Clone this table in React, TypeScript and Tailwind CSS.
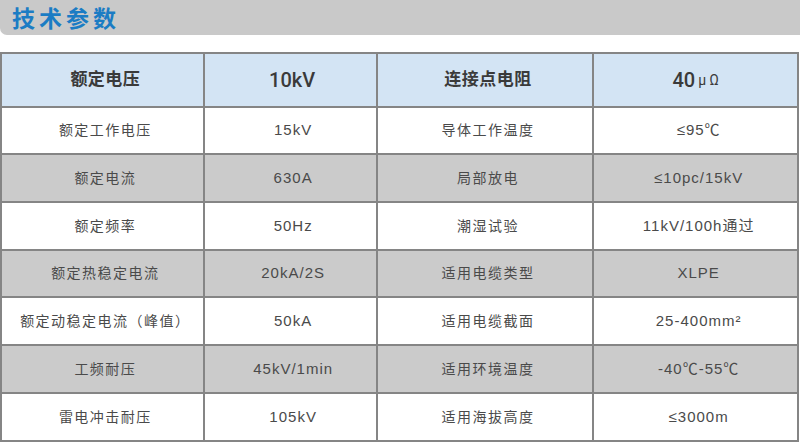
import React from "react";

const rows: [string, string, string, string][] = [
  ["额定工作电压", "15kV", "导体工作温度", "≤95℃"],
  ["额定电流", "630A", "局部放电", "≤10pc/15kV"],
  ["额定频率", "50Hz", "潮湿试验", "11kV/100h通过"],
  ["额定热稳定电流", "20kA/2S", "适用电缆类型", "XLPE"],
  ["额定动稳定电流（峰值）", "50kA", "适用电缆截面", "25-400mm²"],
  ["工频耐压", "45kV/1min", "适用环境温度", "-40℃-55℃"],
  ["雷电冲击耐压", "105kV", "适用海拔高度", "≤3000m"],
];

const heights = ["h-[47px]", "h-[48px]", "h-[48px]", "h-[47px]", "h-[48px]", "h-[48px]", "h-[48px]"];
const widths = ["w-[203px]", "w-[173px]", "w-[217px]", "w-[205px]"];

const font = { fontFamily: '"Liberation Sans", "Noto Sans CJK SC", sans-serif' };
const numFont = { fontFamily: 'Roboto, "Liberation Sans", sans-serif' };

export default function App() {
  return (
    <div className="w-[800px] h-[448px] bg-white overflow-hidden" style={font}>
      <div className="h-[35px] bg-[#c9c9c9] rounded-bl-[7px] flex items-center pl-[12px]">
        <span
          className="text-[23px] font-bold text-[#1b7cc4] tracking-[4px] leading-none"
          style={{ fontFamily: '"Noto Sans CJK SC", sans-serif' }}
        >
          技术参数
        </span>
      </div>
      <div className="mt-[17px] w-[799px] border-t-2 border-l-2 border-[#858585]">
        <div className="flex h-[54px] bg-[#d3e4f4] border-b-2 border-[#858585] text-[#3a3a3a]">
          <div className={`${widths[0]} border-r-2 border-[#858585] flex items-center justify-center text-[17px] font-bold tracking-[0.5px] pl-[6px]`}>额定电压</div>
          <div className={`${widths[1]} border-r-2 border-[#858585] flex items-center justify-center text-[20px] font-medium pl-[4px]`} style={numFont}>10kV</div>
          <div className={`${widths[2]} border-r-2 border-[#858585] flex items-center justify-center text-[17px] font-bold tracking-[0.5px] pl-[6px]`}>连接点电阻</div>
          <div className={`${widths[3]} border-r-2 border-[#858585] flex items-center justify-center text-[20px] font-medium`} style={numFont}>
            40<span className="text-[14px] font-normal ml-[3px]">μ Ω</span>
          </div>
        </div>
        {rows.map((r, i) => (
          <div
            key={i}
            className={`flex ${heights[i]} border-b-2 border-[#858585] text-[#4a4a4a] ${i % 2 === 1 ? "bg-[#cbcbcb]" : "bg-white"}`}
          >
            {r.map((c, j) => (
              <div
                key={j}
                className={`${widths[j]} border-r-2 border-[#858585] flex items-center justify-center pl-[6px] ${j % 2 === 1 ? "text-[15px] tracking-[1px]" : "text-[14px] tracking-[1.5px]"}`}
              >
                {c}
              </div>
            ))}
          </div>
        ))}
      </div>
    </div>
  );
}
